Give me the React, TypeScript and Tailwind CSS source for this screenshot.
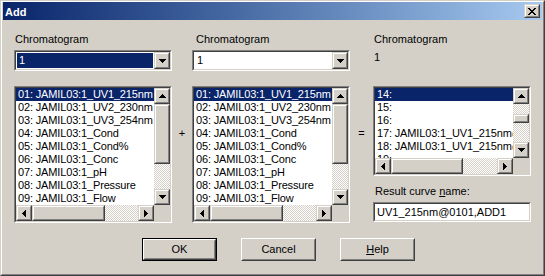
import React from 'react';

type Dir = 'up' | 'down' | 'left' | 'right';

function Arrow({ dir }: { dir: Dir }) {
  const rows = [
    [3, 1],
    [2, 3],
    [1, 5],
    [0, 7],
  ];
  if (dir === 'up' || dir === 'down') {
    return (
      <svg width="7" height="4" viewBox="0 0 7 4" shapeRendering="crispEdges">
        {rows.map(([x, w], i) => (
          <rect key={i} x={x} y={dir === 'up' ? i : 3 - i} width={w} height={1} fill="#000" />
        ))}
      </svg>
    );
  }
  return (
    <svg width="4" height="7" viewBox="0 0 4 7" shapeRendering="crispEdges">
      {rows.map(([y, h], i) => (
        <rect key={i} x={dir === 'left' ? i : 3 - i} y={y} width={1} height={h} fill="#000" />
      ))}
    </svg>
  );
}

function Raised({ className = '', children }: { className?: string; children?: React.ReactNode }) {
  return (
    <div
      className={`shrink-0 border border-t-[#d4d0c8] border-l-[#d4d0c8] border-r-[#404040] border-b-[#404040] bg-[#d4d0c8] ${className}`}
    >
      <div className="w-full h-full border border-t-white border-l-white border-r-[#808080] border-b-[#808080] flex items-center justify-center">
        {children}
      </div>
    </div>
  );
}

function Sunken({ className = '', children }: { className?: string; children?: React.ReactNode }) {
  return (
    <div className={`border border-t-[#808080] border-l-[#808080] border-r-white border-b-white ${className}`}>
      <div className="w-full h-full border border-t-[#404040] border-l-[#404040] border-r-[#d4d0c8] border-b-[#d4d0c8] bg-white flex flex-col overflow-hidden">
        {children}
      </div>
    </div>
  );
}

const track = 'bg-[repeating-conic-gradient(#ffffff_0_25%,#d4d0c8_0_50%)] bg-[length:2px_2px]';

function ListBox({
  items,
  height,
  v,
  h,
}: {
  items: string[];
  height: string;
  v: [number, number];
  h: [number, number];
}) {
  return (
    <Sunken className={`w-[158px] ${height}`}>
      <div className="flex flex-1 min-h-0">
        <div className="flex-1 min-w-0 overflow-hidden">
          {items.map((it, i) => (
            <div
              key={it}
              className={`h-[13px] leading-[13px] pl-[2px] whitespace-nowrap tracking-[-0.15px] ${
                i === 0 ? 'bg-[#0a246a] text-white' : 'text-black'
              }`}
            >
              {it}
            </div>
          ))}
        </div>
        <div className="w-[16px] flex flex-col">
          <Raised className="h-[16px]">
            <Arrow dir="up" />
          </Raised>
          <div className={track} style={{ height: v[0] }} />
          <Raised className="w-full">
            <div style={{ height: v[1] - 4 }} />
          </Raised>
          <div className={`flex-1 ${track}`} />
          <Raised className="h-[16px]">
            <Arrow dir="down" />
          </Raised>
        </div>
      </div>
      <div className="h-[16px] flex shrink-0">
        <Raised className="w-[16px]">
          <Arrow dir="left" />
        </Raised>
        <div className={track} style={{ width: h[0] }} />
        <Raised>
          <div style={{ width: h[1] - 4 }} />
        </Raised>
        <div className={`flex-1 ${track}`} />
        <Raised className="w-[16px]">
          <Arrow dir="right" />
        </Raised>
        <div className="w-[16px] bg-[#d4d0c8]" />
      </div>
    </Sunken>
  );
}

function Combo({ value, active }: { value: string; active?: boolean }) {
  return (
    <Sunken className="w-[158px] h-[21px]">
      <div className="flex h-full">
        <div className="flex-1 p-px">
          <div
            className={`h-[15px] leading-[15px] pl-[2px] ${active ? 'bg-[#0a246a] text-white' : 'text-black'}`}
          >
            {value}
          </div>
        </div>
        <Raised className="w-[16px] h-full">
          <Arrow dir="down" />
        </Raised>
      </div>
    </Sunken>
  );
}

function Button({ label, def, u }: { label: string; def?: boolean; u?: boolean }) {
  const text = u ? (
    <span>
      <span className="underline">{label[0]}</span>
      {label.slice(1)}
    </span>
  ) : (
    label
  );
  if (def) {
    return (
      <div className="w-[75px] h-[23px] border border-black">
        <div className="w-full h-full border border-t-white border-l-white border-r-[#404040] border-b-[#404040]">
          <div className="w-full h-full border border-t-[#d4d0c8] border-l-[#d4d0c8] border-r-[#808080] border-b-[#808080] flex items-center justify-center">
            {text}
          </div>
        </div>
      </div>
    );
  }
  return (
    <div className="w-[75px] h-[23px] border border-t-white border-l-white border-r-[#404040] border-b-[#404040]">
      <div className="w-full h-full border border-t-[#d4d0c8] border-l-[#d4d0c8] border-r-[#808080] border-b-[#808080] flex items-center justify-center">
        {text}
      </div>
    </div>
  );
}

const chroms = [
  '01: JAMIL03:1_UV1_215nm',
  '02: JAMIL03:1_UV2_230nm',
  '03: JAMIL03:1_UV3_254nm',
  '04: JAMIL03:1_Cond',
  '05: JAMIL03:1_Cond%',
  '06: JAMIL03:1_Conc',
  '07: JAMIL03:1_pH',
  '08: JAMIL03:1_Pressure',
  '09: JAMIL03:1_Flow',
];

const results = [
  '14:',
  '15:',
  '16:',
  '17: JAMIL03:1_UV1_215nm@0101',
  '18: JAMIL03:1_UV1_215nm@0101',
  '19:',
];

export default function App() {
  return (
    <div className="w-[545px] h-[276px] overflow-hidden border border-t-[#d4d0c8] border-l-[#d4d0c8] border-r-[#404040] border-b-[#404040] bg-[#d4d0c8] font-['Liberation_Sans',Arial,sans-serif] text-[11px] leading-[13px] text-black">
      <div className="h-full border border-t-white border-l-white border-r-[#808080] border-b-[#808080] px-px">
        <div className="h-[18px] flex justify-between bg-linear-to-r from-[#0a246a] to-[#a6caf0]">
          <span className="pl-[2px] pt-[4px] font-bold text-white">Add</span>
          <Raised className="w-[16px] h-[14px] mt-[2px] mr-[2px]">
            <svg width="8" height="7" viewBox="0 0 8 7" shapeRendering="crispEdges">
              <path
                d="M0 0h2v1h-2zM6 0h2v1h-2zM1 1h2v1h-2zM5 1h2v1h-2zM2 2h4v1h-4zM3 3h2v1h-2zM2 4h4v1h-4zM1 5h2v1h-2zM5 5h2v1h-2zM0 6h2v1h-2zM6 6h2v1h-2z"
                fill="#000"
              />
            </svg>
          </Raised>
        </div>

        <div className="flex pl-[11px] pt-[13px]">
          <div className="w-[158px] flex flex-col">
            <div className="pl-px">Chromatogram</div>
            <div className="mt-[4px]">
              <Combo value="1" active />
            </div>
            <div className="mt-[15px]">
              <ListBox items={chroms} height="h-[137px]" v={[0, 60]} h={[0, 73]} />
            </div>
          </div>

          <div className="w-[20px] pt-[94px] text-center">+</div>

          <div className="w-[158px] flex flex-col">
            <div className="pl-[4px]">Chromatogram</div>
            <div className="mt-[4px]">
              <Combo value="1" />
            </div>
            <div className="mt-[15px]">
              <ListBox items={chroms} height="h-[137px]" v={[0, 60]} h={[0, 73]} />
            </div>
          </div>

          <div className="w-[23px] pt-[94px] text-center">=</div>

          <div className="w-[158px] flex flex-col">
            <div className="pl-px">Chromatogram</div>
            <div className="mt-[5px] pl-px">1</div>
            <div className="mt-[22px]">
              <ListBox items={results} height="h-[90px]" v={[10, 9]} h={[0, 72]} />
            </div>
            <div className="mt-[9px] pl-[2px]">
              Result curve <span className="underline">n</span>ame:
            </div>
            <Sunken className="mt-[4px] h-[20px]">
              <div className="pl-[2px] pt-[2px] whitespace-nowrap">UV1_215nm@0101,ADD1</div>
            </Sunken>
          </div>
        </div>

        <div className="flex gap-[24px] pl-[139px] mt-[15px]">
          <Button label="OK" def />
          <Button label="Cancel" />
          <Button label="Help" u />
        </div>
      </div>
    </div>
  );
}
